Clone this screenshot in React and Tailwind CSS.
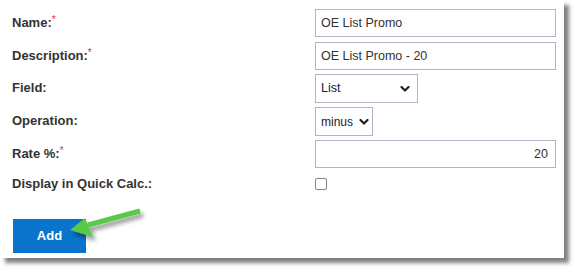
import React from "react";

function Label({ children, req }) {
  return (
    <div className="w-[303px] shrink-0 text-[13px] font-bold text-[#333] leading-none relative top-[-1px]">
      {children}
      {req && <span className="text-[#e02f3a] text-[10px] align-top relative top-[-1px] font-normal">*</span>}
    </div>
  );
}

function Chevron({ right }) {
  return (
    <svg width="10" height="7" viewBox="0 0 10 7" className={"absolute top-1/2 -translate-y-1/2 pointer-events-none " + (right ? "right-[3px]" : "right-[7px]")}>
      <path d="M1.5 1.5 L5 5 L8.5 1.5" fill="none" stroke="#222" strokeWidth="2.2" strokeLinecap="round" strokeLinejoin="round" />
    </svg>
  );
}

export default function App() {
  const font = { fontFamily: '"Liberation Sans", Arial, sans-serif' };
  return (
    <div className="w-[580px] h-[273px] bg-white relative overflow-hidden" style={font}>
      <div className="w-[564px] h-[258px] bg-white shadow-[5px_5px_4px_rgba(0,0,0,0.5)] pl-[12px] pt-[9px] flex flex-col">
        <div className="flex items-center h-[28px]">
          <Label req>Name:</Label>
          <input
            readOnly
            value="OE List Promo"
            className="w-[241px] h-[28px] border border-[#b3b3c3] px-[5px] text-[12.5px] text-[#333] outline-none"
            style={font}
          />
        </div>
        <div className="flex items-center h-[28px] mt-[5px]">
          <Label req>Description:</Label>
          <input
            readOnly
            value="OE List Promo - 20"
            className="w-[241px] h-[28px] border border-[#b3b3c3] px-[5px] text-[12.5px] text-[#333] outline-none"
            style={font}
          />
        </div>
        <div className="flex items-center h-[29px] mt-[4px]">
          <Label>Field:</Label>
          <div className="relative w-[103px] h-[29px] border border-[#b3b3c3] flex items-center px-[5px] text-[12.5px] text-[#222]">
            List
            <Chevron />
          </div>
        </div>
        <div className="flex items-center h-[29px] mt-[4px]">
          <Label>Operation:</Label>
          <div className="relative w-[58px] h-[29px] border border-[#b3b3c3] flex items-center px-[5px] text-[12px] text-[#222]">
            minus
            <Chevron right />
          </div>
        </div>
        <div className="flex items-center h-[28px] mt-[4px]">
          <Label req>Rate %:</Label>
          <input
            readOnly
            value="20"
            className="w-[241px] h-[28px] border border-[#b3b3c3] px-[7px] text-right text-[12.5px] text-[#333] outline-none"
            style={font}
          />
        </div>
        <div className="flex items-center h-[14px] mt-[9px]">
          <Label>Display in Quick Calc.:</Label>
          <div className="w-[12px] h-[12px] border border-[#858585] rounded-[2px] bg-white" />
        </div>
        <div className="mt-[28px] ml-[1px]">
          <div className="w-[73px] h-[34px] bg-[#0a74cc] text-white font-bold text-[13px] flex items-center justify-center">
            Add
          </div>
        </div>
      </div>
      <svg width="90" height="50" viewBox="0 0 90 50" className="absolute left-[60px] top-[200px]" style={{ overflow: "visible" }}>
        <defs>
          <filter id="sh" x="-20%" y="-20%" width="150%" height="170%">
            <feGaussianBlur in="SourceAlpha" stdDeviation="2" />
            <feOffset dx="3" dy="4" result="b" />
            <feComponentTransfer>
              <feFuncA type="linear" slope="0.4" />
            </feComponentTransfer>
            <feMerge>
              <feMergeNode />
              <feMergeNode in="SourceGraphic" />
            </feMerge>
          </filter>
        </defs>
        <g filter="url(#sh)">
          <line x1="80" y1="11" x2="28" y2="25" stroke="#5ac84a" strokeWidth="5" strokeLinecap="butt" />
          <polygon points="10,30 25,18 33,37" fill="#5ac84a" />
        </g>
      </svg>
    </div>
  );
}
